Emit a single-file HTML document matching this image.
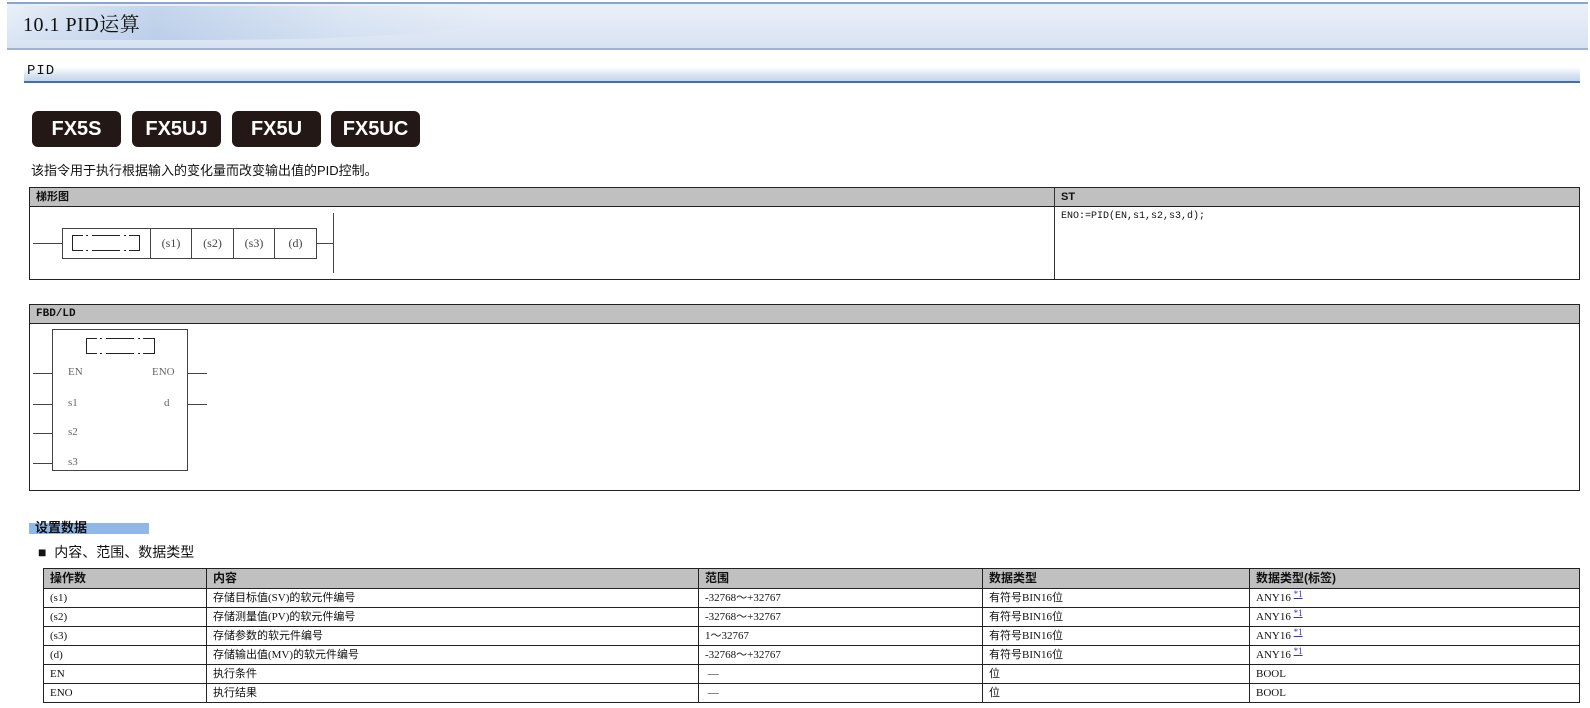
<!DOCTYPE html>
<html><head><meta charset="utf-8">
<style>
*{margin:0;padding:0;box-sizing:border-box}
body{width:1590px;height:708px;background:#fff;position:relative;overflow:hidden;font-family:"Liberation Serif","Noto Serif CJK SC",serif;color:#111}
.a{position:absolute}
.hdr{left:7px;top:2px;width:1581px;height:48px;border-top:2px solid #8aa4d4;border-bottom:2px solid #9fb3d8;background:linear-gradient(180deg,#eaf0f8 0%,#dfe8f5 60%,#d7e2f2 100%)}
.sweep{left:10px;top:6px;width:480px;height:34px;background:linear-gradient(90deg,rgba(140,170,215,.0) 0%,rgba(150,180,220,.45) 30%,rgba(190,210,235,.25) 70%,rgba(255,255,255,0) 100%);border-radius:0 0 60% 0}
.t1{left:23px;top:13px;font-size:20px;line-height:24px;letter-spacing:0.5px}
.pidbar{left:24px;top:67px;width:1556px;height:16px;background:linear-gradient(180deg,#fff 0%,#d6e2f0 60%,#c4d5ea 100%);border-bottom:2px solid #3f73a6}
.pid{left:27px;top:63px;font-family:"Liberation Mono",monospace;font-size:14px;letter-spacing:1px}
.bd{top:111px;width:89px;height:36px;background:#231815;border-radius:6px;color:#fff;font-family:"Liberation Sans",sans-serif;font-weight:bold;font-size:20px;text-align:center;line-height:36px}
.sans{font-family:"Liberation Sans","Noto Sans CJK SC",sans-serif}
.box{border:1px solid #222}
.gh{background:#c0c0c0;border-bottom:1px solid #222;font-family:"Liberation Sans","Noto Sans CJK SC",sans-serif;font-weight:bold;font-size:11px;padding-left:6px}
.ln{background:#333}
.cell{position:absolute;font-size:12px;color:#444;text-align:center}
table{border-collapse:collapse;position:absolute;left:43px;top:568px;width:1537px;font-size:11px;font-family:"Liberation Serif","Noto Sans CJK SC",serif;table-layout:fixed}
td,th{border:1px solid #222;height:19px;padding:0 6px;text-align:left;white-space:nowrap;line-height:17px;overflow:hidden}
th{background:#c0c0c0;font-family:"Liberation Sans","Noto Sans CJK SC",sans-serif;font-weight:bold;font-size:12px;height:20px}
.s{color:#33c;text-decoration:underline;font-size:9px;position:relative;top:-4px;line-height:0}
</style></head><body>
<div class="a hdr"></div>
<div class="a sweep"></div>
<div class="a t1">10.1 PID运算</div>
<div class="a pidbar"></div>
<div class="a pid">PID</div>
<div class="a bd" style="left:32px">FX5S</div>
<div class="a bd" style="left:132px">FX5UJ</div>
<div class="a bd" style="left:232px">FX5U</div>
<div class="a bd" style="left:331px">FX5UC</div>
<div class="a sans" style="left:31px;top:160px;font-size:13px">该指令用于执行根据输入的变化量而改变输出值的PID控制。</div>

<div class="a box" style="left:29px;top:187px;width:1551px;height:93px"></div>
<div class="a gh" style="left:30px;top:188px;width:1024px;height:19px;line-height:18px">梯形图</div>
<div class="a gh" style="left:1054px;top:188px;width:525px;height:19px;line-height:18px;border-left:1px solid #222">ST</div>
<div class="a ln" style="left:1054px;top:188px;width:1px;height:91px"></div>
<div class="a" style="left:1061px;top:211px;font-size:10px;font-family:'Liberation Mono',monospace">ENO:=PID(EN,s1,s2,s3,d);</div>
<svg class="a" style="left:0;top:0" width="400" height="300">
<g stroke="#444" fill="none" stroke-width="1">
<line x1="33" y1="243.5" x2="62" y2="243.5"/>
<rect x="62.5" y="228.5" width="254" height="30"/>
<line x1="150.5" y1="228" x2="150.5" y2="259"/>
<line x1="191.5" y1="228" x2="191.5" y2="259"/>
<line x1="233.5" y1="228" x2="233.5" y2="259"/>
<line x1="274.5" y1="228" x2="274.5" y2="259"/>
<line x1="316" y1="243.5" x2="333" y2="243.5"/>
<line x1="333.5" y1="213" x2="333.5" y2="273"/>
<path d="M83 235.5H72.5V250.5H83 M86 235.5H88 M86 250.5H88 M92 235.5H120 M92 250.5H120 M124 235.5H126 M124 250.5H126 M129 235.5H139.5V250.5H129" stroke="#222"/>
</g>
</svg>
<div class="cell" style="left:151px;top:236px;width:40px">(s1)</div>
<div class="cell" style="left:192px;top:236px;width:41px">(s2)</div>
<div class="cell" style="left:234px;top:236px;width:40px">(s3)</div>
<div class="cell" style="left:275px;top:236px;width:41px">(d)</div>

<div class="a box" style="left:29px;top:304px;width:1551px;height:187px"></div>
<div class="a gh" style="left:30px;top:305px;width:1549px;height:19px;line-height:18px;font-family:'Liberation Mono',monospace">FBD/LD</div>
<svg class="a" style="left:0;top:300px" width="220" height="190">
<g stroke="#444" fill="none">
<rect x="52.5" y="29.5" width="135" height="141"/>
<line x1="33" y1="73.5" x2="52" y2="73.5"/>
<line x1="33" y1="104.5" x2="52" y2="104.5"/>
<line x1="33" y1="133.5" x2="52" y2="133.5"/>
<line x1="33" y1="163.5" x2="52" y2="163.5"/>
<line x1="188" y1="73.5" x2="207" y2="73.5"/>
<line x1="188" y1="104.5" x2="207" y2="104.5"/>
<path d="M97 38.5H86.5V53.5H97 M100 38.5H102 M100 53.5H102 M106 38.5H134 M106 53.5H134 M138 38.5H140 M138 53.5H140 M143 38.5H154.5V53.5H143" stroke="#222"/>
</g>
</svg>
<div class="a" style="left:68px;top:366px;font-size:11px;color:#666">EN</div>
<div class="a" style="left:152px;top:366px;font-size:11px;color:#666">ENO</div>
<div class="a" style="left:68px;top:397px;font-size:11px;color:#666">s1</div>
<div class="a" style="left:164px;top:397px;font-size:11px;color:#666">d</div>
<div class="a" style="left:68px;top:426px;font-size:11px;color:#666">s2</div>
<div class="a" style="left:68px;top:456px;font-size:11px;color:#666">s3</div>

<div class="a" style="left:29px;top:523px;width:120px;height:11px;background:#8fb8e8"></div>
<div class="a sans" style="left:35px;top:517px;font-size:13px;font-weight:bold">设置数据</div>
<div class="a sans" style="left:38px;top:542px;font-size:14px">■&nbsp; 内容、范围、数据类型</div>

<table>
<colgroup><col style="width:163px"><col style="width:492px"><col style="width:284px"><col style="width:267px"><col></colgroup>
<tr><th>操作数</th><th>内容</th><th>范围</th><th>数据类型</th><th>数据类型(标签)</th></tr>
<tr><td>(s1)</td><td>存储目标值(SV)的软元件编号</td><td>-32768～+32767</td><td>有符号BIN16位</td><td>ANY16 <span class="s">*1</span></td></tr>
<tr><td>(s2)</td><td>存储测量值(PV)的软元件编号</td><td>-32768～+32767</td><td>有符号BIN16位</td><td>ANY16 <span class="s">*1</span></td></tr>
<tr><td>(s3)</td><td>存储参数的软元件编号</td><td>1～32767</td><td>有符号BIN16位</td><td>ANY16 <span class="s">*1</span></td></tr>
<tr><td>(d)</td><td>存储输出值(MV)的软元件编号</td><td>-32768～+32767</td><td>有符号BIN16位</td><td>ANY16 <span class="s">*1</span></td></tr>
<tr><td>EN</td><td>执行条件</td><td>&nbsp;—</td><td>位</td><td>BOOL</td></tr>
<tr><td>ENO</td><td>执行结果</td><td>&nbsp;—</td><td>位</td><td>BOOL</td></tr>
</table>
</body></html>
